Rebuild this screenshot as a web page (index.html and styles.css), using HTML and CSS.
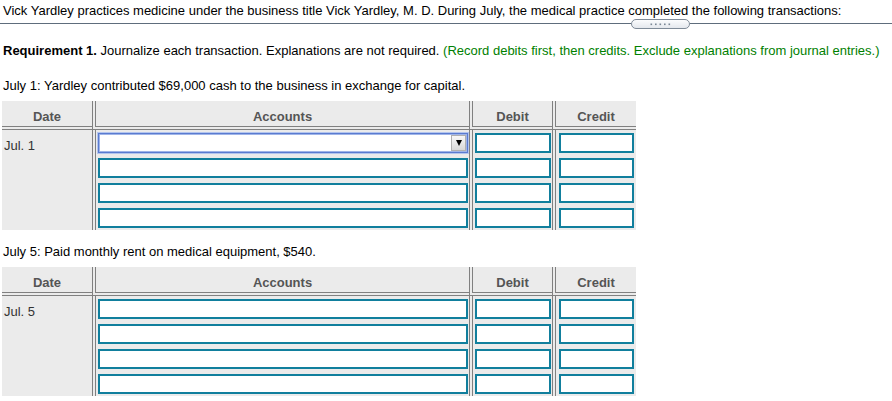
FILE: index.html
```html
<!DOCTYPE html>
<html>
<head>
<meta charset="utf-8">
<title>Journal entries</title>
<link rel="stylesheet" href="styles.css">
</head>
<body>
<div class="page">
  <p class="intro">Vick Yardley practices medicine under the business title Vick Yardley, M. D. During July, the medical practice completed the following transactions:</p>
  <div class="divider">
    <span class="rule rule-left"></span>
    <span class="pill">
      <svg class="dots" width="22" height="3" viewBox="0 0 22 3"><rect x="0.5" y="0.5" width="1.6" height="1.6"/><rect x="5" y="0.5" width="1.6" height="1.6"/><rect x="9.5" y="0.5" width="1.6" height="1.6"/><rect x="14" y="0.5" width="1.6" height="1.6"/><rect x="18.5" y="0.5" width="1.6" height="1.6"/></svg>
    </span>
    <span class="rule rule-right"></span>
  </div>
  <p class="req"><b>Requirement 1.</b> Journalize each transaction. Explanations are not required. <span class="hint">(Record debits first, then credits. Exclude explanations from journal entries.)</span></p>

  <p class="txn txn-first">July 1: Yardley contributed $69,000 cash to the business in exchange for capital.</p>
  <div class="journal">
    <div class="hd">Date</div>
    <div class="hd col">Accounts</div>
    <div class="hd col">Debit</div>
    <div class="hd col">Credit</div>
    <div class="date">Jul. 1</div>
    <div class="col entries">
      <div class="field select"><span class="drop"><span class="tri"></span></span></div>
      <div class="field"></div>
      <div class="field"></div>
      <div class="field"></div>
    </div>
    <div class="col entries">
      <div class="field"></div>
      <div class="field"></div>
      <div class="field"></div>
      <div class="field"></div>
    </div>
    <div class="col entries credit">
      <div class="field"></div>
      <div class="field"></div>
      <div class="field"></div>
      <div class="field"></div>
    </div>
  </div>

  <p class="txn">July 5: Paid monthly rent on medical equipment, $540.</p>
  <div class="journal">
    <div class="hd">Date</div>
    <div class="hd col">Accounts</div>
    <div class="hd col">Debit</div>
    <div class="hd col">Credit</div>
    <div class="date">Jul. 5</div>
    <div class="col entries">
      <div class="field"></div>
      <div class="field"></div>
      <div class="field"></div>
      <div class="field"></div>
    </div>
    <div class="col entries">
      <div class="field"></div>
      <div class="field"></div>
      <div class="field"></div>
      <div class="field"></div>
    </div>
    <div class="col entries credit">
      <div class="field"></div>
      <div class="field"></div>
      <div class="field"></div>
      <div class="field"></div>
    </div>
  </div>
</div>
</body>
</html>
```

FILE: styles.css
```css
html, body {
  margin: 0;
  padding: 0;
  background: #ffffff;
}

body {
  font-family: "Liberation Sans", Arial, sans-serif;
  font-size: 13px;
  line-height: 15px;
  color: #000000;
}

.page {
  padding: 3px 0 0 2px;
}

.page p {
  margin: 0;
  padding-left: 1px;
}

.divider {
  display: flex;
  align-items: flex-start;
  height: 10px;
  margin: 1px 0 0 -2px;
}

.rule {
  display: block;
  height: 1px;
  margin-top: 4px;
  background: #5e6d7c;
}

.rule-left {
  flex: 0 0 631px;
}

.rule-right {
  flex: 1 1 auto;
}

.pill {
  flex: 0 0 59px;
  box-sizing: border-box;
  height: 10px;
  border: 1px solid #7f8b98;
  border-radius: 5px;
  background: linear-gradient(#fbfcfd, #e4e8ed);
  display: flex;
  align-items: center;
  justify-content: center;
}

.dots {
  display: block;
  fill: #7a8795;
}

.req {
  margin-top: 14px !important;
}

.hint {
  color: #008000;
}

.txn {
  margin-top: 14px !important;
}

.txn-first {
  margin-top: 20px !important;
}

.journal {
  display: grid;
  grid-template-columns: 90px 377px 83px 84px;
  width: 634px;
  margin-top: 8px;
  background: #ebebeb;
}

.hd {
  box-sizing: border-box;
  height: 29px;
  padding-top: 8px;
  text-align: center;
  font-weight: bold;
  color: #555555;
  border-bottom: 4px double #808080;
}

.col {
  border-left: 4px double #808080;
}

.date {
  padding: 8px 0 0 2px;
  color: #333333;
}

.entries {
  display: flex;
  flex-direction: column;
  gap: 5px;
  padding: 3px 1px 2px 2px;
}

.entries.credit {
  padding: 3px 2px 2px 3px;
}

.field {
  box-sizing: border-box;
  height: 20px;
  border: 2px solid #117f9d;
  background: #ffffff;
}

.field.select {
  display: flex;
  justify-content: flex-end;
  border: 1px solid #5a7bd0;
  outline: 1px solid #b4c5ee;
  box-shadow: inset 0 0 0 1px #9fb4e8;
  padding: 1px;
}

.drop {
  box-sizing: border-box;
  width: 15px;
  display: flex;
  align-items: center;
  justify-content: center;
  background: linear-gradient(#f8f8f8, #d8d8d8);
  border: 1px solid #b0b0b0;
}

.tri {
  width: 0;
  height: 0;
  border-left: 3px solid transparent;
  border-right: 3px solid transparent;
  border-top: 6px solid #000000;
}
```
